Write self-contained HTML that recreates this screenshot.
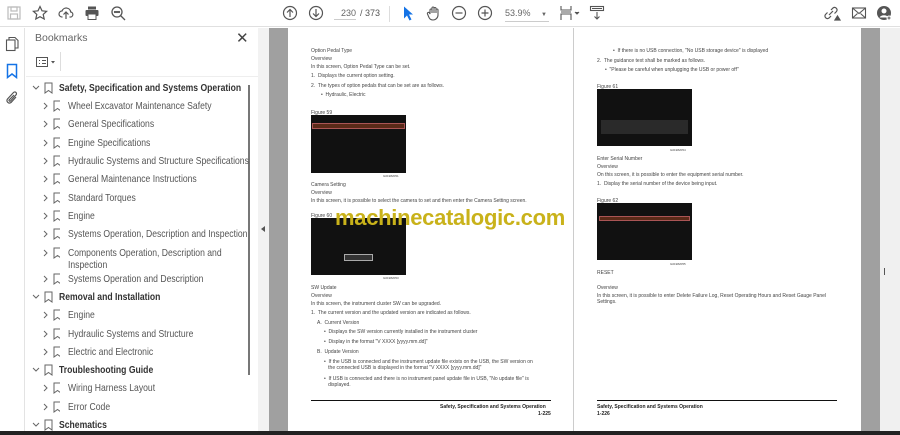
<!DOCTYPE html>
<html><head><meta charset="utf-8"><style>
*{margin:0;padding:0;box-sizing:border-box}
body{width:900px;height:435px;overflow:hidden;background:#fff;font-family:"Liberation Sans",sans-serif;position:relative}
.a{position:absolute}
.tb{left:0;top:0;width:900px;height:27px;background:#fff;border-bottom:1px solid #e0e0e0}
.ic{position:absolute;top:5px}
.rail{left:0;top:28px;width:25px;height:403px;border-right:1px solid #e3e3e3;background:#fff}
.panel{left:26px;top:28px;width:232px;height:403px;background:#fff}
.bm{position:absolute;font-size:10.5px;color:#555;white-space:nowrap;line-height:12px;transform:scaleX(0.82);transform-origin:0 0}
.bm.h{font-weight:bold;color:#333}
.pg{background:#fff;position:absolute;top:28px;height:403px}
.t{position:absolute;font-size:5px;color:#444;white-space:nowrap;line-height:6px}
.scr{background:#111;position:absolute}
</style></head><body>
<div class="a tb">
<svg class="ic" style="left:6px" width="16" height="16" viewBox="0 0 16 16" fill="none" stroke="#bbb" stroke-width="1.2"><rect x="2" y="2" width="12" height="12"/><rect x="5" y="2" width="6" height="4"/><rect x="4.5" y="9" width="7" height="5"/></svg>
<svg class="ic" style="left:32px" width="16" height="16" viewBox="0 0 16 16" fill="none" stroke="#555" stroke-width="1.2"><path d="M8 1.5l2 4.3 4.6.5-3.4 3.1 1 4.6L8 11.7 3.8 14l1-4.6L1.4 6.3 6 5.8z"/></svg>
<svg class="ic" style="left:58px" width="16" height="16" viewBox="0 0 16 16" fill="none" stroke="#555" stroke-width="1.2"><path d="M4.5 12H4a3 3 0 0 1 0-6 4.5 4.5 0 0 1 8.7 1A2.5 2.5 0 0 1 12 12h-.5M8 14V7M5.5 9.5L8 7l2.5 2.5"/></svg>
<svg class="ic" style="left:84px" width="16" height="16" viewBox="0 0 16 16" fill="#555"><rect x="4" y="1.5" width="8" height="3"/><rect x="1.5" y="5" width="13" height="6" rx="1"/><rect x="4" y="9" width="8" height="5.5" fill="#fff" stroke="#555"/></svg>
<svg class="ic" style="left:110px" width="16" height="16" viewBox="0 0 16 16" fill="none" stroke="#555" stroke-width="1.3"><circle cx="7" cy="7" r="5"/><path d="M10.5 10.5L15 15"/><circle cx="5" cy="7" r=".5" fill="#555"/><circle cx="7" cy="7" r=".5" fill="#555"/><circle cx="9" cy="7" r=".5" fill="#555"/></svg>
<svg class="ic" style="left:282px" width="16" height="16" viewBox="0 0 16 16" fill="none" stroke="#555" stroke-width="1.2"><circle cx="8" cy="8" r="6.5"/><path d="M8 12V4.5M5 7.5l3-3 3 3"/></svg>
<svg class="ic" style="left:308px" width="16" height="16" viewBox="0 0 16 16" fill="none" stroke="#555" stroke-width="1.2"><circle cx="8" cy="8" r="6.5"/><path d="M8 4v7.5M5 8.5l3 3 3-3"/></svg>
<div class="a" style="left:334px;top:7px;width:22px;font-size:9px;color:#666;text-align:right;border-bottom:1px solid #ccc;line-height:12px">230</div>
<div class="a" style="left:360px;top:7px;font-size:9px;color:#555;line-height:12px">/ 373</div>
<div class="a" style="left:389px;top:6px;width:1px;height:16px;background:#ddd"></div>
<svg class="ic" style="left:400px" width="16" height="16" viewBox="0 0 16 16"><path d="M4 1.5v12l3-3 2.5 5 2-1-2.5-5h4z" fill="#1473e6"/></svg>
<svg class="ic" style="left:426px" width="16" height="16" viewBox="0 0 16 16" fill="none" stroke="#555" stroke-width="1.1"><path d="M4 9V5a1 1 0 0 1 2 0v3V3a1 1 0 0 1 2 0v5V3.5a1 1 0 0 1 2 0V8V5a1 1 0 0 1 2 0v5a5 5 0 0 1-5 5 4.5 4.5 0 0 1-4-2.5L1.5 9a1 1 0 0 1 2-1z"/></svg>
<svg class="ic" style="left:451px" width="16" height="16" viewBox="0 0 16 16" fill="none" stroke="#555" stroke-width="1.2"><circle cx="8" cy="8" r="6.5"/><path d="M4.5 8h7"/></svg>
<svg class="ic" style="left:477px" width="16" height="16" viewBox="0 0 16 16" fill="none" stroke="#555" stroke-width="1.2"><circle cx="8" cy="8" r="6.5"/><path d="M4.5 8h7M8 4.5v7"/></svg>
<div class="a" style="left:505px;top:7px;width:44px;font-size:9px;color:#666;border-bottom:1px solid #ccc;line-height:12px">53.9% <span style="margin-left:8px;font-size:6px">▼</span></div>
<svg class="ic" style="left:559px" width="22" height="16" viewBox="0 0 22 16" fill="none" stroke="#555" stroke-width="1.1"><path d="M2 1v4h10V1M2 15v-6h10v6M2 7h10"/><path d="M16 7l2 2 2-2" fill="#555"/></svg>
<svg class="ic" style="left:589px" width="16" height="16" viewBox="0 0 16 16" fill="none" stroke="#555" stroke-width="1.1"><rect x="1.5" y="1.5" width="13" height="4"/><path d="M8 7v7M5.5 11.5L8 14l2.5-2.5M3 3.5h10"/></svg>
<svg class="ic" style="left:823px" width="18" height="16" viewBox="0 0 18 16" fill="none" stroke="#555" stroke-width="1.2"><path d="M6 10l4-4M4.5 7.5l-2 2a2.5 2.5 0 0 0 3.5 3.5l2-2M11.5 8.5l2-2A2.5 2.5 0 0 0 10 3L8 5"/><path d="M12 15l2.5-4 2.5 4z" fill="#555"/></svg>
<svg class="ic" style="left:851px" width="16" height="16" viewBox="0 0 16 16" fill="none" stroke="#555" stroke-width="1.1"><rect x="1.5" y="3" width="13" height="10"/><path d="M1.5 3l6.5 5.5L14.5 3M1.5 13l5-4.5M14.5 13l-5-4.5"/></svg>
<svg class="ic" style="left:876px" width="16" height="16" viewBox="0 0 16 16"><circle cx="8" cy="8" r="7" fill="#555"/><circle cx="8" cy="6" r="2.5" fill="#fff"/><path d="M3.5 12.5a5 4 0 0 1 9 0" fill="#fff"/><circle cx="13" cy="13" r="2.5" fill="#fff"/><path d="M13 11.5v3M11.5 13h3" stroke="#555"/></svg>
</div>
<div class="a rail">
<svg class="a" style="left:5px;top:8px" width="14" height="16" viewBox="0 0 14 16" fill="none" stroke="#555" stroke-width="1.1"><path d="M4 4V1.5h6l3 3V12h-3"/><rect x="1.5" y="4" width="8.5" height="10.5"/></svg>
<svg class="a" style="left:6px;top:35px" width="12" height="16" viewBox="0 0 12 16" fill="none" stroke="#1473e6" stroke-width="1.5"><path d="M1.5 1.5h9v13L6 11l-4.5 3.5z"/></svg>
<svg class="a" style="left:5px;top:62px" width="14" height="16" viewBox="0 0 14 16" fill="none" stroke="#555" stroke-width="1.2"><path d="M11 7l-5 5.5a2.5 2.5 0 0 1-3.5-3.5l6-6.5a1.7 1.7 0 0 1 2.5 2.4L5.5 11a.8.8 0 0 1-1.2-1.2L9 5"/></svg>
</div>
<div class="a panel">
<div class="a" style="left:9px;top:4px;font-size:10.5px;color:#666">Bookmarks</div>
<div class="a" style="left:210px;top:1px;font-size:15px;color:#444">✕</div>
<svg class="a" style="left:9px;top:28px" width="24" height="12" viewBox="0 0 24 12" fill="none" stroke="#555"><rect x="1.5" y="1.5" width="11" height="9"/><path d="M4 4.5h1M7 4.5h4M4 7.5h1M7 7.5h4"/><path d="M16 5h4l-2 2.5z" fill="#555" stroke="none"/></svg>
<div class="a" style="left:34px;top:24px;width:1px;height:19px;background:#ddd"></div>
<div class="a" style="left:222px;top:57px;width:2px;height:290px;background:#777"></div>
<div class="a" style="left:0;top:48px;width:232px;height:1px;background:#eee"></div>
</div>
<div class="a" style="left:258px;top:28px;width:11px;height:403px;background:#f2f2f2"></div>
<div class="a" style="left:261px;top:226px;width:0;height:0;border-top:3px solid transparent;border-bottom:3px solid transparent;border-right:4px solid #555"></div>
<div class="a" style="left:269px;top:28px;width:19px;height:403px;background:#a0a0a0"></div>
<div class="a" style="left:861px;top:28px;width:19px;height:403px;background:#a0a0a0"></div>
<div class="a" style="left:880px;top:28px;width:20px;height:403px;background:#f0f0f0"></div>
<div class="a" style="left:884px;top:268px;width:1px;height:7px;background:#555"></div>
<div class="a" style="left:0;top:431px;width:900px;height:4px;background:#222"></div>

<div class="pg" style="left:288px;width:286px;border-right:1px solid #ccc"></div>
<div class="pg" style="left:575px;width:286px"></div>

<div class="t" style="left:311px;top:48px">Option Pedal Type</div>
<div class="t" style="left:311px;top:56px">Overview</div>
<div class="t" style="left:311px;top:64px">In this screen, Option Pedal Type can be set.</div>
<div class="t" style="left:311px;top:73px">1.&nbsp; Displays the current option setting.</div>
<div class="t" style="left:311px;top:83px">2.&nbsp; The types of option pedals that can be set are as follows.</div>
<div class="t" style="left:321px;top:92px">• &nbsp;Hydraulic, Electric</div>
<div class="t" style="left:311px;top:110px">Figure 59</div>
<div class="scr" style="left:311px;top:115px;width:95px;height:58px"><div style="margin:8px 1px 0;height:6px;background:#5a2a18;border:1px solid #a55"></div></div>
<div class="t" style="left:383px;top:173px;font-size:3px">G01982051</div>
<div class="t" style="left:311px;top:182px">Camera Setting</div>
<div class="t" style="left:311px;top:190px">Overview</div>
<div class="t" style="left:311px;top:198px">In this screen, it is possible to select the camera to set and then enter the Camera Setting screen.</div>
<div class="t" style="left:311px;top:213px">Figure 60</div>
<div class="scr" style="left:311px;top:218px;width:95px;height:57px"><div style="margin:36px 33px 0;height:7px;border:1px solid #aaa;background:#333"></div></div>
<div class="t" style="left:383px;top:275px;font-size:3px">G01982053</div>
<div class="t" style="left:311px;top:285px">SW Update</div>
<div class="t" style="left:311px;top:293px">Overview</div>
<div class="t" style="left:311px;top:301px">In this screen, the instrument cluster SW can be upgraded.</div>
<div class="t" style="left:311px;top:310px">1.&nbsp; The current version and the updated version are indicated as follows.</div>
<div class="t" style="left:317px;top:320px">A.&nbsp; Current Version</div>
<div class="t" style="left:324px;top:329px">• &nbsp;Displays the SW version currently installed in the instrument cluster</div>
<div class="t" style="left:324px;top:339px">• &nbsp;Display in the format "V XXXX [yyyy.mm.dd]"</div>
<div class="t" style="left:317px;top:349px">B.&nbsp; Update Version</div>
<div class="t" style="left:324px;top:359px">• &nbsp;If the USB is connected and the instrument update file exists on the USB, the SW version on<br>&nbsp;&nbsp;&nbsp;the connected USB is displayed in the format "V XXXX [yyyy.mm.dd]"</div>
<div class="t" style="left:324px;top:376px">• &nbsp;If USB is connected and there is no instrument panel update file in USB, "No update file" is<br>&nbsp;&nbsp;&nbsp;displayed.</div>
<div class="a" style="left:311px;top:400px;width:240px;height:1px;background:#111"></div>
<div class="t" style="left:440px;top:404px;font-weight:bold;color:#222">Safety, Specification and Systems Operation</div>
<div class="t" style="left:538px;top:411px;font-weight:bold;color:#222">1-225</div>

<div class="t" style="left:613px;top:48px">• &nbsp;If there is no USB connection, "No USB storage device" is displayed</div>
<div class="t" style="left:597px;top:58px">2.&nbsp; The guidance text shall be marked as follows.</div>
<div class="t" style="left:605px;top:67px">• &nbsp;"Please be careful when unplugging the USB or power off"</div>
<div class="t" style="left:597px;top:84px">Figure 61</div>
<div class="scr" style="left:597px;top:89px;width:95px;height:57px"><div style="margin:31px 4px 0;height:14px;background:#2a2a2a"></div></div>
<div class="t" style="left:670px;top:147px;font-size:3px">G01982054</div>
<div class="t" style="left:597px;top:156px">Enter Serial Number</div>
<div class="t" style="left:597px;top:164px">Overview</div>
<div class="t" style="left:597px;top:172px">On this screen, it is possible to enter the equipment serial number.</div>
<div class="t" style="left:597px;top:181px">1.&nbsp; Display the serial number of the device being input.</div>
<div class="t" style="left:597px;top:198px">Figure 62</div>
<div class="scr" style="left:597px;top:203px;width:95px;height:57px"><div style="margin:13px 2px 0;height:5px;background:#5a2a18;border:1px solid #a55"></div></div>
<div class="t" style="left:670px;top:261px;font-size:3px">G01982055</div>
<div class="t" style="left:597px;top:270px">RESET</div>
<div class="t" style="left:597px;top:285px">Overview</div>
<div class="t" style="left:597px;top:293px">In this screen, it is possible to enter Delete Failure Log, Reset Operating Hours and Reset Gauge Panel<br>Settings.</div>
<div class="a" style="left:597px;top:400px;width:240px;height:1px;background:#111"></div>
<div class="t" style="left:597px;top:404px;font-weight:bold;color:#222">Safety, Specification and Systems Operation</div>
<div class="t" style="left:597px;top:411px;font-weight:bold;color:#222">1-226</div>

<div class="a" style="left:335px;top:204px;font-size:22px;font-weight:bold;color:#c9b21a;white-space:nowrap;line-height:28px;letter-spacing:-0.3px">machinecatalogic.com</div>

<div class="bm h" style="left:59px;top:82px">Safety, Specification and Systems Operation</div>
<div class="bm" style="left:68px;top:100px">Wheel Excavator Maintenance Safety</div>
<div class="bm" style="left:68px;top:118px">General Specifications</div>
<div class="bm" style="left:68px;top:137px">Engine Specifications</div>
<div class="bm" style="left:68px;top:155px">Hydraulic Systems and Structure Specifications</div>
<div class="bm" style="left:68px;top:173px">General Maintenance Instructions</div>
<div class="bm" style="left:68px;top:192px">Standard Torques</div>
<div class="bm" style="left:68px;top:210px">Engine</div>
<div class="bm" style="left:68px;top:228px">Systems Operation, Description and Inspection</div>
<div class="bm" style="left:68px;top:247px">Components Operation, Description and<br>Inspection</div>
<div class="bm" style="left:68px;top:273px">Systems Operation and Description</div>
<div class="bm h" style="left:59px;top:291px">Removal and Installation</div>
<div class="bm" style="left:68px;top:309px">Engine</div>
<div class="bm" style="left:68px;top:328px">Hydraulic Systems and Structure</div>
<div class="bm" style="left:68px;top:346px">Electric and Electronic</div>
<div class="bm h" style="left:59px;top:364px">Troubleshooting Guide</div>
<div class="bm" style="left:68px;top:382px">Wiring Harness Layout</div>
<div class="bm" style="left:68px;top:401px">Error Code</div>
<div class="bm h" style="left:59px;top:419px">Schematics</div>
<svg class="a" style="left:0;top:0" width="60" height="435" viewBox="0 0 60 435" fill="none" stroke="#666" stroke-width="1">
<g id="h"><path d="M33 86l3 3 3-3"/><path d="M45 83h7v10l-3.5-2.5L45 93z"/></g>
<use href="#h" y="209"/><use href="#h" y="282"/><use href="#h" y="337"/>
<g id="c"><path d="M44 103l3 3-3 3"/><path d="M54 101h7v10l-3.5-2.5L54 111z"/></g>
<use href="#c" y="18"/><use href="#c" y="37"/><use href="#c" y="55"/><use href="#c" y="73"/><use href="#c" y="92"/><use href="#c" y="110"/><use href="#c" y="128"/><use href="#c" y="147"/><use href="#c" y="173"/><use href="#c" y="209"/><use href="#c" y="228"/><use href="#c" y="246"/><use href="#c" y="282"/><use href="#c" y="301"/>
</svg>
</body></html>
